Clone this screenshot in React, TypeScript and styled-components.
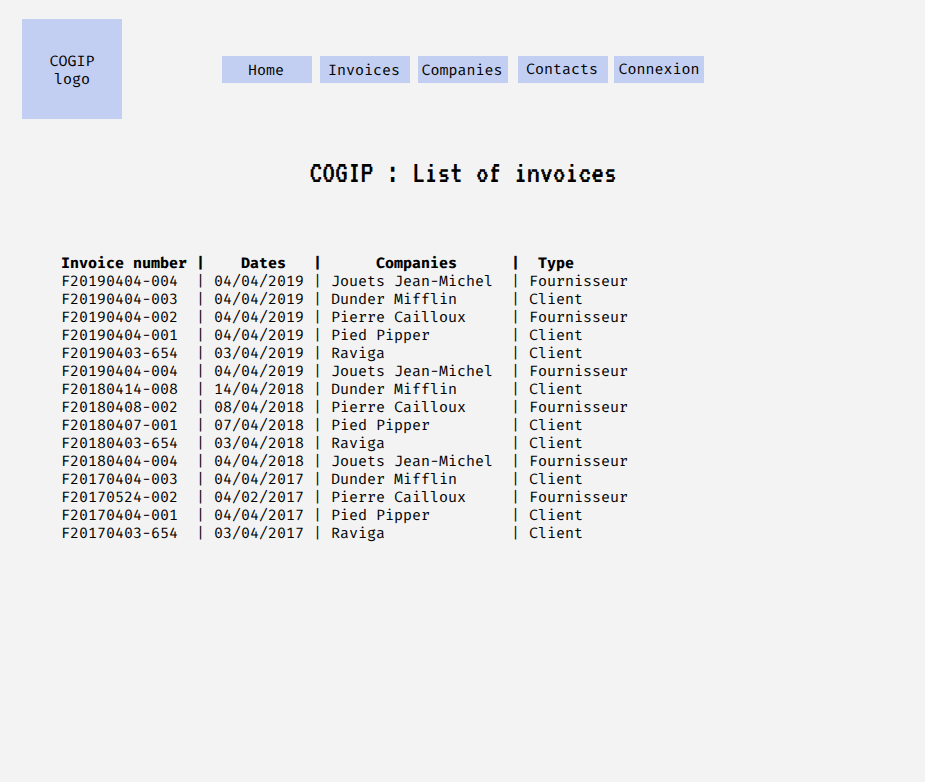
import React from "react";
import styled, { createGlobalStyle } from "styled-components";

const GlobalStyle = createGlobalStyle`
  * { box-sizing: border-box; }
  body {
    margin: 0;
    background: #f3f3f3;
    color: #000;
    font-family: "Fira Mono", "DejaVu Sans Mono", monospace;
    font-size: 15px;
    line-height: 18px;
    text-rendering: geometricPrecision;
  }
`;

const Page = styled.div`
  min-height: 782px;
  padding: 19px 22px 0;
`;

const Header = styled.header`
  display: flex;
  align-items: flex-start;
  height: 100px;
`;

const Logo = styled.div`
  display: flex;
  align-items: center;
  justify-content: center;
  width: 100px;
  height: 100px;
  padding-top: 1px;
  background: #c3cff2;
  text-align: center;
`;

const Nav = styled.nav`
  display: flex;
  margin: 37px 0 0 100px;
`;

const NavItem = styled.a<{ $gap: number; $lift: number; $nudge: number }>`
  width: 90px;
  height: 27px;
  margin-right: ${(p) => p.$gap}px;
  padding-top: ${(p) => 5 - p.$lift}px;
  background: #c3cff2;
  text-align: center;
  text-indent: ${(p) => p.$nudge}px;
  white-space: nowrap;
`;

const Title = styled.h1`
  width: 308px;
  height: 32px;
  margin: 38px 0 0 287.5px;
  font-family: "VT323", "Fira Mono", "DejaVu Sans Mono", monospace;
  font-size: 32px;
  line-height: 32px;
  font-weight: 400;
  white-space: nowrap;
`;

const Table = styled.div`
  margin: 65px 0 0 39px;
`;

const Row = styled.div<{ $head?: boolean }>`
  display: grid;
  grid-template-columns: 135px 9px 108px 9px 189px 9px 120px;
  height: 18px;
  font-weight: ${(p) => (p.$head ? 700 : 400)};
  white-space: pre;
`;

const Cell = styled.span<{ $indent?: number }>`
  padding-left: ${(p) => (p.$indent ?? 0) * 9}px;
`;

const Bar = styled.span`
  text-align: center;
`;

const links = [
  { label: "Home", gap: 8, lift: 0, nudge: -2 },
  { label: "Invoices", gap: 8, lift: 0, nudge: -2 },
  { label: "Companies", gap: 10, lift: 0, nudge: -2 },
  { label: "Contacts", gap: 6, lift: 1, nudge: -2 },
  { label: "Connexion", gap: 0, lift: 1, nudge: 0 },
];

const invoices = [
  ["F20190404-004", "04/04/2019", "Jouets Jean-Michel", "Fournisseur"],
  ["F20190404-003", "04/04/2019", "Dunder Mifflin", "Client"],
  ["F20190404-002", "04/04/2019", "Pierre Cailloux", "Fournisseur"],
  ["F20190404-001", "04/04/2019", "Pied Pipper", "Client"],
  ["F20190403-654", "03/04/2019", "Raviga", "Client"],
  ["F20190404-004", "04/04/2019", "Jouets Jean-Michel", "Fournisseur"],
  ["F20180414-008", "14/04/2018", "Dunder Mifflin", "Client"],
  ["F20180408-002", "08/04/2018", "Pierre Cailloux", "Fournisseur"],
  ["F20180407-001", "07/04/2018", "Pied Pipper", "Client"],
  ["F20180403-654", "03/04/2018", "Raviga", "Client"],
  ["F20180404-004", "04/04/2018", "Jouets Jean-Michel", "Fournisseur"],
  ["F20170404-003", "04/04/2017", "Dunder Mifflin", "Client"],
  ["F20170524-002", "04/02/2017", "Pierre Cailloux", "Fournisseur"],
  ["F20170404-001", "04/04/2017", "Pied Pipper", "Client"],
  ["F20170403-654", "03/04/2017", "Raviga", "Client"],
];

function InvoiceRow({ cells, indents, head }: { cells: string[]; indents: number[]; head?: boolean }) {
  return (
    <Row $head={head}>
      {cells.map((text, i) => (
        <React.Fragment key={i}>
          {i > 0 && <Bar>|</Bar>}
          <Cell $indent={indents[i]}>{text}</Cell>
        </React.Fragment>
      ))}
    </Row>
  );
}

export default function App() {
  return (
    <>
      <GlobalStyle />
      <Page>
        <Header>
          <Logo>
            COGIP
            <br />
            logo
          </Logo>
          <Nav>
            {links.map((l) => (
              <NavItem key={l.label} $gap={l.gap} $lift={l.lift} $nudge={l.nudge}>
                {l.label}
              </NavItem>
            ))}
          </Nav>
        </Header>
        <Title>COGIP : List of invoices</Title>
        <Table>
          <InvoiceRow head cells={["Invoice number", "Dates", "Companies", "Type"]} indents={[0, 4, 6, 2]} />
          {invoices.map((row, i) => (
            <InvoiceRow key={i} cells={row} indents={[0, 1, 1, 1]} />
          ))}
        </Table>
      </Page>
    </>
  );
}
